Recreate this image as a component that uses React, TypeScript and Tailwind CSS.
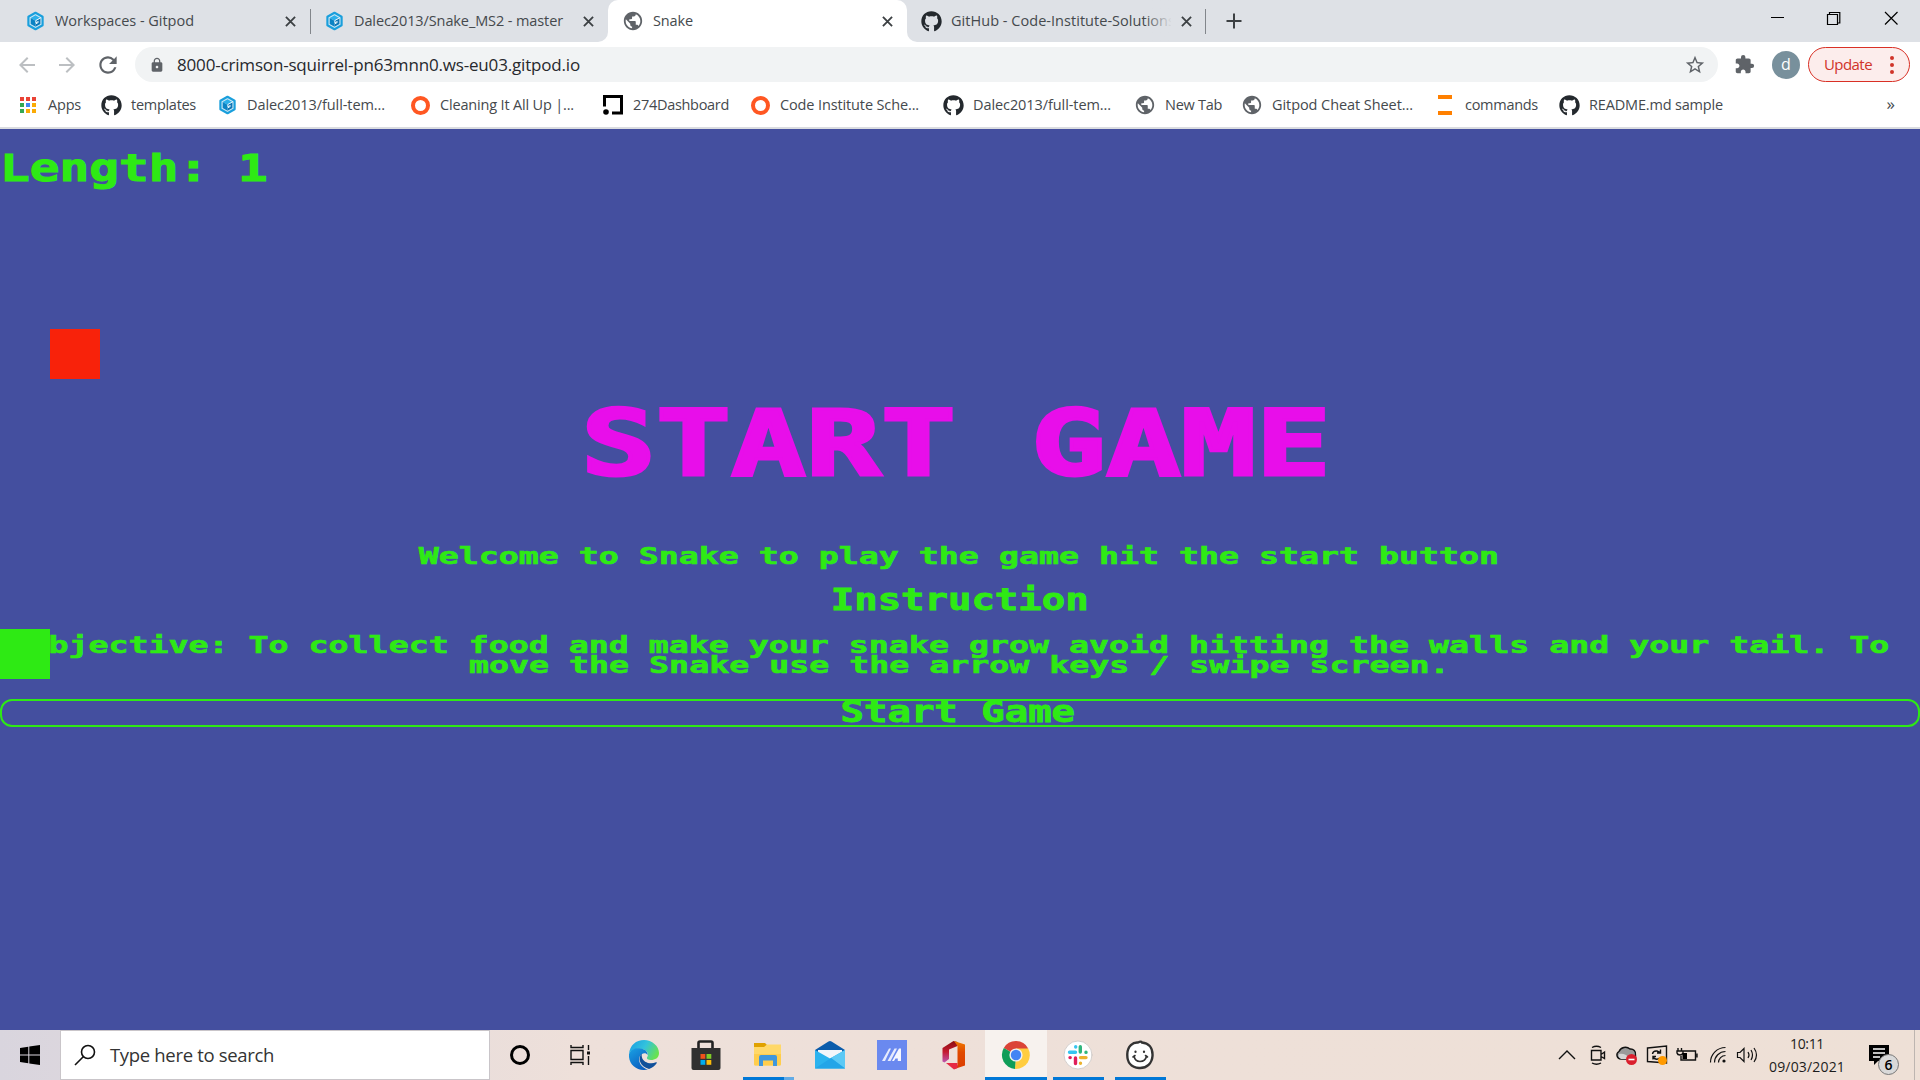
import React, { useLayoutEffect, useRef, useState, type ReactNode } from "react";
import { FaGithub } from "react-icons/fa";
import { MdArrowBack, MdArrowForward, MdExtension, MdLock, MdPublic, MdRefresh, MdStarBorder } from "react-icons/md";

/** Single-line label whose tracking is adjusted so that it fills the given width. */
function Fit({ w, className = "", children }: { w: number; className?: string; children: string }) {
  const ref = useRef<HTMLSpanElement>(null);
  const [spacing, setSpacing] = useState(0);
  useLayoutEffect(() => {
    if (ref.current) setSpacing((w - ref.current.getBoundingClientRect().width) / children.length);
  }, []);
  return (
    <span ref={ref} className={`inline-block shrink-0 whitespace-pre ${className}`} style={{ letterSpacing: spacing }}>
      {children}
    </span>
  );
}

function Gitpod() {
  return (
    <svg viewBox="0 0 20 22" className="h-[20px] w-[19px] shrink-0">
      <path d="M10 2 L17.800 6.400 V15.600 L10 20 L2.200 15.600 V6.400 Z" fill="#cfe9f6" stroke="#1a9fdc" strokeWidth="2.400" strokeLinejoin="round" />
      <path d="M10 4.800 L15.400 7.600 L10 10.800 L4.700 7.800 Z" fill="#2cb0ea" />
      <path d="M4.700 7.800 L10 10.800 V17.300 L4.700 14.300 Z" fill="#0b83c4" />
      <path d="M10 10.800 L15.400 8 V14.300 L10 17.300 Z" fill="#0f76b5" />
      <path d="M15.800 7.400 L10.400 10.400 V13 L13 11.600 V12.600 L10.400 14.200" fill="none" stroke="#e6f5fc" strokeWidth="1.100" />
    </svg>
  );
}

function Close() {
  return (
    <svg viewBox="0 0 12 12" className="h-[11px] w-[11px] shrink-0" stroke="#3c4043" strokeWidth="2">
      <path d="M1 1 L11 11 M11 1 L1 11" />
    </svg>
  );
}

const Globe = () => <MdPublic className="h-[22px] w-[22px] shrink-0 text-[#5f6368]" />;
const Github = () => <FaGithub className="h-[21px] w-[21px] shrink-0 text-[#24292e]" />;
const Ring = () => <span className="h-[19px] w-[19px] shrink-0 rounded-full border-[4.500px] border-[#ff5722]" />;

function Tab({ icon, text, w, className, children }: { icon: ReactNode; text: string; w: number; className: string; children?: ReactNode }) {
  return (
    <div className={`relative flex h-[42px] shrink-0 items-center text-[14.5px] text-[#45494d] ${className}`}>
      <span className="flex w-[22px] shrink-0 justify-center">{icon}</span>
      <div className="ml-[9px] min-w-0 flex-1 overflow-hidden">
        <Fit w={w}>{text}</Fit>
      </div>
      {children}
      <Close />
    </div>
  );
}

function TabStrip() {
  return (
    <div className="flex h-[42px] bg-[#dee1e6]">
      <Tab icon={<Gitpod />} text="Workspaces - Gitpod" w={139} className="w-[310px] pr-[14px] pl-[24px]" />
      <span className="mt-[9px] h-[25px] w-px shrink-0 bg-[#82868b]" />
      <Tab icon={<Gitpod />} text="Dalec2013/Snake_MS2 - master" w={209} className="w-[297px] pr-[14px] pl-[12px]" />
      <div className="relative flex w-[299px] shrink-0 rounded-t-[10px] bg-white">
        <span className="absolute bottom-0 -left-[10px] h-[10px] w-[10px] overflow-hidden bg-white">
          <span className="block h-[10px] w-[10px] rounded-br-[10px] bg-[#dee1e6]" />
        </span>
        <span className="absolute -right-[10px] bottom-0 h-[10px] w-[10px] overflow-hidden bg-white">
          <span className="block h-[10px] w-[10px] rounded-bl-[10px] bg-[#dee1e6]" />
        </span>
        <Tab icon={<Globe />} text="Snake" w={40} className="w-[299px] pr-[14px] pl-[14px]" />
      </div>
      <Tab icon={<Github />} text="GitHub - Code-Institute-Solutions" w={224} className="w-[298px] pr-[13px] pl-[13px]">
        <span className="absolute top-0 right-[33px] h-[41px] w-[28px] bg-gradient-to-r from-transparent to-[#dee1e6]" />
        <span className="w-[10px] shrink-0" />
      </Tab>
      <span className="mt-[9px] h-[25px] w-px shrink-0 bg-[#82868b]" />
      <svg viewBox="0 0 16 16" className="mt-[13px] ml-[20px] h-[16px] w-[16px]" stroke="#3c4043" strokeWidth="2">
        <path d="M8 0.5 V15.5 M0.5 8 H15.5" />
      </svg>
      <svg viewBox="0 0 130 16" className="mt-[10px] mr-[20px] ml-auto h-[16px] w-[130px]" fill="none" stroke="#000" strokeWidth="1.2">
        <path d="M1 7.5 H14 M57.5 4.5 H67.5 V14.5 H57.5 Z M59.5 4.5 V2.5 H69.8 V13 H67.5" />
        <path d="M115 2 L127.500 14.500 M127.500 2 L115 14.500" />
      </svg>
    </div>
  );
}

function Toolbar() {
  return (
    <div className="flex h-[45px] items-center bg-white pl-[15px]">
      <MdArrowBack className="h-[24px] w-[24px] text-[#bcbfc2]" />
      <MdArrowForward className="ml-[16px] h-[24px] w-[24px] text-[#bcbfc2]" />
      <MdRefresh className="ml-[16px] h-[26px] w-[26px] text-[#5f6368]" />
      <div className="ml-[14px] flex h-[35px] w-[1583px] items-center rounded-full bg-[#f1f3f4] pr-[12px] pl-[14px]">
        <MdLock className="h-[16px] w-[16px] text-[#5f6368]" />
        <Fit w={403} className="ml-[12px] text-[17px] text-[#27292d]">8000-crimson-squirrel-pn63mnn0.ws-eu03.gitpod.io</Fit>
        <MdStarBorder className="ml-auto h-[22px] w-[22px] text-[#5f6368]" />
      </div>
      <MdExtension className="ml-[16px] h-[21px] w-[21px] text-[#5f6368]" />
      <span className="ml-[17px] flex h-[28px] w-[28px] items-center justify-center rounded-full bg-[#78909c] pb-px text-[16px] text-white">d</span>
      <div className="ml-[8px] flex h-[35px] w-[102px] items-center rounded-full border border-[#d93025] bg-[#fcedec] pl-[15px] text-[15px] text-[#d0342a]">
        <Fit w={48}>Update</Fit>
        <span className="ml-[18px] flex flex-col gap-[3px]">
          <i className="h-[4px] w-[4px] rounded-full bg-[#d0342a]" />
          <i className="h-[4px] w-[4px] rounded-full bg-[#d0342a]" />
          <i className="h-[4px] w-[4px] rounded-full bg-[#d0342a]" />
        </span>
      </div>
    </div>
  );
}

function AppsGrid() {
  return (
    <span className="grid grid-cols-3 gap-[2px]">
      <i className="h-[4px] w-[4px] bg-[#ea4335]" />
      <i className="h-[4px] w-[4px] bg-[#ea4335]" />
      <i className="h-[4px] w-[4px] bg-[#ea4335]" />
      <i className="h-[4px] w-[4px] bg-[#34a853]" />
      <i className="h-[4px] w-[4px] bg-[#4285f4]" />
      <i className="h-[4px] w-[4px] bg-[#fbab05]" />
      <i className="h-[4px] w-[4px] bg-[#34a853]" />
      <i className="h-[4px] w-[4px] bg-[#fbab05]" />
      <i className="h-[4px] w-[4px] bg-[#fbab05]" />
    </span>
  );
}

function Bookmark({ icon, text, w, className }: { icon: ReactNode; text: string; w: number; className: string }) {
  return (
    <div className={`flex shrink-0 items-center ${className}`}>
      <span className="flex w-[22px] justify-center">{icon}</span>
      <Fit w={w} className="ml-[9px]">{text}</Fit>
    </div>
  );
}

function Bookmarks() {
  return (
    <div className="flex h-[42px] items-center border-b-2 border-[#dadce0] bg-white pb-[4px] text-[14.5px] text-[#45494d]">
      <Bookmark icon={<AppsGrid />} text="Apps" w={33} className="w-[100px] pl-[17px]" />
      <Bookmark icon={<Github />} text="templates" w={65} className="w-[116px]" />
      <Bookmark icon={<Gitpod />} text="Dalec2013/full-tem..." w={138} className="w-[193px]" />
      <Bookmark icon={<Ring />} text="Cleaning It All Up |..." w={134} className="w-[193px]" />
      <Bookmark
        icon={
          <svg viewBox="0 0 20 20" className="h-[20px] w-[20px]">
            <path d="M1.500 11.500 V1.500 H18.500 V18 H9" fill="none" stroke="#000" strokeWidth="3" />
            <circle cx="3" cy="17" r="2.800" />
          </svg>
        }
        text="274Dashboard"
        w={96}
        className="w-[147px]"
      />
      <Bookmark icon={<Ring />} text="Code Institute Sche..." w={139} className="w-[193px]" />
      <Bookmark icon={<Github />} text="Dalec2013/full-tem..." w={138} className="w-[192px]" />
      <Bookmark icon={<Globe />} text="New Tab" w={57} className="w-[107px]" />
      <Bookmark icon={<Globe />} text="Gitpod Cheat Sheet..." w={141} className="w-[193px]" />
      <Bookmark
        icon={<span className="h-[20px] w-[14px] border-y-4 border-[#ff8000]" />}
        text="commands"
        w={73}
        className="w-[124px]"
      />
      <Bookmark icon={<Github />} text="README.md sample" w={134} className="w-[180px]" />
      <span className="mr-[25px] ml-auto pb-[3px] text-[17px]">»</span>
    </div>
  );
}

function Game() {
  return (
    <main className="relative h-[901px] overflow-hidden bg-[#444f9f] font-['DejaVu_Sans_Mono',monospace] font-bold whitespace-nowrap text-[#2eea14]">
      <div className="flex h-[77px] items-center pt-px text-[38px] leading-none">
        <span className="origin-left scale-x-[1.300] [-webkit-text-stroke:1px_#2eea14]">Length: 1</span>
      </div>
      <h1 className="mt-[171px] flex h-[132px] items-center justify-center pt-px pr-[8px] text-[90px] leading-none text-[#e80eea]">
        <span className="scale-x-[1.384] [-webkit-text-stroke:3px_#e80eea]">START GAME</span>
      </h1>
      <p className="mt-[29px] flex h-[36px] items-center justify-center pr-[2px] text-[23px] leading-none">
        <span className="scale-x-[1.445] [-webkit-text-stroke:0.6px_#2eea14]">Welcome to Snake to play the game hit the start button</span>
      </p>
      <h2 className="mt-[7px] flex h-[40px] items-center justify-center text-[29.5px] leading-none">
        <span className="scale-x-[1.320] [-webkit-text-stroke:0.8px_#2eea14]">Instruction</span>
      </h2>
      <p className="mt-[14px] flex flex-col items-center pr-[2px] text-[23px] leading-[20.400px]">
        <span className="scale-x-[1.445] [-webkit-text-stroke:0.6px_#2eea14]">Objective: To collect food and make your snake grow avoid hitting the walls and your tail. To</span>
        <span className="scale-x-[1.445] [-webkit-text-stroke:0.6px_#2eea14]">move the Snake use the arrow keys / swipe screen.</span>
      </p>
      <button className="mt-[23px] flex h-[28px] w-full items-center justify-center rounded-[12px] border-2 border-[#2eea14] pr-[4px] text-[29.5px] leading-none">
        <span className="scale-x-[1.320] [-webkit-text-stroke:0.8px_#2eea14]">Start Game</span>
      </button>
      <div className="absolute top-[200px] left-[50px] h-[50px] w-[50px] bg-[#f8220a]" />
      <div className="absolute top-[500px] left-0 h-[50px] w-[50px] bg-[#2eea14]" />
    </main>
  );
}

function EdgeIcon() {
  return (
    <svg viewBox="0 0 30 30" className="h-[30px] w-[30px]">
      <defs>
        <linearGradient id="edgeTop" x1="0" y1="0.2" x2="1" y2="0.6">
          <stop offset="0" stopColor="#1ba0e2" />
          <stop offset="0.5" stopColor="#33c3dd" />
          <stop offset="1" stopColor="#6be34c" />
        </linearGradient>
        <linearGradient id="edgeSide" x1="0" y1="0" x2="0.6" y2="1">
          <stop offset="0" stopColor="#1aa1e4" />
          <stop offset="1" stopColor="#0a5fc0" />
        </linearGradient>
      </defs>
      <path d="M0 14 C1 5 7 0 15 0 C23 0 30 6 30 13 C30 18 26 20 22 20 C19 20 17.500 19 18 17.500 C20 15 19 10 13 9 C7 8 2 10 0 14 Z" fill="url(#edgeTop)" />
      <path d="M0 14 C2 9 7 7.500 12 8.500 C17 9.500 19 12.500 18.500 15 C17 12 12 13 10.500 17 C9 23 13 28 19 29.500 C9 32 -1 25 0 14 Z" fill="url(#edgeSide)" />
      <path d="M13 13.500 C8 18 11 26.500 20 29 C23 28 26 26 27.800 23 C28 22 27.500 22 27 22.300 C21 25 14 22 13 17.500 C12.700 16 12.500 15 13 13.500 Z" fill="#10509a" />
    </svg>
  );
}

function StoreIcon() {
  return (
    <svg viewBox="0 0 30 30" className="h-[30px] w-[30px]">
      <path d="M7.500 9 V3 Q7.500 1.500 9 1.500 H20 Q21.500 1.500 21.500 3 V9" fill="none" stroke="#222" strokeWidth="2.600" />
      <path d="M0.500 8 H29.500 V28 Q29.500 30 27.500 30 H2.500 Q0.500 30 0.500 28 Z" fill="#303030" />
      <path d="M9.500 14 H14.300 V18.800 H9.500 Z" fill="#f1511b" />
      <path d="M15.500 14 H20.300 V18.800 H15.500 Z" fill="#80cc28" />
      <path d="M9.500 20 H14.300 V24.800 H9.500 Z" fill="#00adef" />
      <path d="M15.500 20 H20.300 V24.800 H15.500 Z" fill="#fbbc09" />
    </svg>
  );
}

function ExplorerIcon() {
  return (
    <svg viewBox="0 0 30 30" className="h-[30px] w-[30px]">
      <path d="M1 3 H12 L14 5 V8 H1 Z" fill="#e0a100" />
      <path d="M1 7 H11 L14 4.500 H28 V24 Q28 25.500 26.500 25.500 H2.500 Q1 25.500 1 24 Z" fill="#ffd869" />
      <path d="M1 14 H28 V24 Q28 25.500 26.500 25.500 H2.500 Q1 25.500 1 24 Z" fill="#ffcd4c" />
      <path d="M6 26 V17 Q6 15 8 15 H22 Q24 15 24 17 V26 H20 V20.500 H10 V26 Z" fill="#3f97dc" />
    </svg>
  );
}

function MailIcon() {
  return (
    <svg viewBox="0 0 30 30" className="h-[30px] w-[30px]">
      <path d="M0 10 L13.500 1.500 Q15 0.500 16.500 1.500 L30 10 V18 H0 Z" fill="#0b5cab" />
      <path d="M3 10 H27 V20 H3 Z" fill="#f3f6fa" />
      <path d="M0 10 L15 18.500 L30 10 V28.500 H0 Z" fill="#2bb3ee" />
      <path d="M16 18 L30 10 V28.500 Z" fill="#5cc9f5" />
      <path d="M0 28.500 L16 18 L30 28.500 Z" fill="#22a5e8" />
    </svg>
  );
}

function AsusIcon() {
  return (
    <svg viewBox="0 0 30 30" className="h-[30px] w-[30px]">
      <path d="M0 0 H30 V30 H0 Z" fill="#6a89ef" />
      <path d="M5 21 L12 8.500 H14 L8 21 Z M10.500 21 L17.500 8.500 H20 L13.500 21 Z" fill="#e6ebfd" />
      <path d="M15 21 L22 8.500 H24 V21 H20.800 V18.500 H18.500 L17 21 Z" fill="#f5f7ff" />
    </svg>
  );
}

function OfficeIcon() {
  return (
    <svg viewBox="0 0 30 30" className="h-[30px] w-[30px]">
      <defs>
        <linearGradient id="officeLeft" x1="0" y1="0" x2="0" y2="1">
          <stop offset="0" stopColor="#8c0d10" />
          <stop offset="0.5" stopColor="#c41a30" />
          <stop offset="1" stopColor="#bd55b0" />
        </linearGradient>
        <linearGradient id="officeRight" x1="0" y1="0" x2="0" y2="1">
          <stop offset="0" stopColor="#f07a00" />
          <stop offset="0.4" stopColor="#e04a00" />
          <stop offset="1" stopColor="#dc3c00" />
        </linearGradient>
      </defs>
      <path d="M3.500 8 L14.500 1 L18.500 2 V6 L10 9.500 V19 L5.500 22.500 L3.500 21.500 Z" fill="url(#officeLeft)" />
      <path d="M15 1 L26 4.500 V25.500 L15.500 29 L18.500 25 V6 Z" fill="url(#officeRight)" />
      <path d="M7 23 H18.500 V28 L15 29.500 Z" fill="#e62a45" />
    </svg>
  );
}

function ChromeIcon() {
  return (
    <svg viewBox="0 0 30 30" className="h-[30px] w-[30px]">
      <path d="M15 15 L2.800 8 A14 14 0 0 1 27.200 8.500 Z" fill="#db4437" />
      <path d="M15 15 L27.200 8.500 A14 14 0 0 1 15 29 L14 29 Z" fill="#ffcd40" />
      <path d="M15 15 L14 29 A14 14 0 0 1 2.800 8 Z" fill="#0f9d58" />
      <path d="M15 8.500 H27.200 L21 18.500 L14.500 29 L15 21 Z" fill="#ffcd40" />
      <circle cx="15" cy="15" r="6.600" fill="#f1f1f1" />
      <circle cx="15" cy="15" r="5.200" fill="#4285f4" />
    </svg>
  );
}

function SlackIcon() {
  return (
    <svg viewBox="0 0 30 30" className="h-[30px] w-[30px]" fill="none" strokeWidth="3.400" strokeLinecap="round">
      <circle cx="15" cy="15" r="14" fill="#fff" stroke="#c9c4c2" strokeWidth="0.800" />
      <path d="M12.700 6.800 V7 M6.500 12.300 H12.500" stroke="#36c5f0" />
      <path d="M23 12.400 V12.300 M17.300 6.700 V12" stroke="#2eb67d" />
      <path d="M7 17.600 H7.200 M12.500 18 V23.500" stroke="#e01e5a" />
      <path d="M17.500 17.600 H23 M17.500 23.200 V23.300" stroke="#ecb22e" />
    </svg>
  );
}

function BalsamiqIcon() {
  return (
    <svg viewBox="0 0 30 30" className="h-[30px] w-[30px]" fill="none" stroke="#333" strokeLinecap="round">
      <path d="M13 2.500 C8 2 2.500 6 2.300 14 C2 22 6 27.500 14 28 C22 28.500 27 23 27.500 16 C28 7 23 3 17 2.500 C16 1 15 1.500 13 2.500 Z" fill="#fff" strokeWidth="2.400" />
      <path d="M9 16 Q10 21.500 15 21.500 Q20.500 21.500 21.500 16 M8 17 L10 15.500 M20.500 15.500 L22.500 17" strokeWidth="1.600" />
      <path d="M10.500 11.500 V12 M19 11.500 V12" strokeWidth="2.200" />
    </svg>
  );
}

function TaskApp({ children, className = "", bar }: { children: ReactNode; className?: string; bar?: ReactNode }) {
  return (
    <div className={`relative flex h-[50px] w-[62px] shrink-0 items-center justify-center ${className}`}>
      {children}
      {bar}
    </div>
  );
}

const Underline = () => <span className="absolute bottom-0 left-[6px] h-[3px] w-[51px] bg-[#0078d7]" />;

function Tray() {
  return (
    <svg viewBox="0 0 210 30" className="mr-[8px] ml-auto h-[30px] w-[210px] shrink-0" fill="none" stroke="#111" strokeWidth="1.400">
      <path d="M9 19 L17 11 L25 19" />
      <path d="M41.500 10.500 H51 V20 H41.500 Z M51 14.500 L54.500 12 V18.500 L51 16.500 M42 7.500 Q46.500 5 51 7.500 M42 23 Q46.500 25.500 51 23" />
      <path d="M71 19 A4 4 0 0 1 69 11.500 A7 7 0 0 1 80 9 A5 5 0 0 1 85.500 15 V19 Z" fill="#9a9a9a" />
      <path d="M69 14 Q76 13 80 19 H71 Q67.500 17 69 14 Z" fill="#d5d5d5" stroke="none" />
      <circle cx="81.500" cy="19.500" r="5.500" fill="#da1f2d" stroke="none" />
      <path d="M78.500 19.500 H84.500" stroke="#fff" strokeWidth="1.600" />
      <path d="M97.500 8 L116.500 6 V23 L97.500 21.500 Z M102.500 14 Q103 10.500 107 11 L110 12.500 M110.500 9.500 V13 H107 M103 19.500 V16.500 H106 M103 17 Q106 21 110 18" />
      <circle cx="112.500" cy="20.500" r="4.500" fill="#ff9a00" stroke="none" />
      <path d="M133 11 H145.500 V20 H131 V16 M147 13.500 V17.500 M128 8 V11 M131.500 8 V11 M127 11 H133 V13 Q132.500 15 130 15 Q127.500 15 127 13 Z" />
      <path d="M132.500 13 H137 V19 H132.500 Z" fill="#000" stroke="none" />
      <path d="M160.500 22.500 A15 15 0 0 1 175.500 7.500 M164.500 22.500 A11 11 0 0 1 175.500 11.500 M168.500 22.500 A7 7 0 0 1 175.500 15.500" strokeWidth="1.200" />
      <circle cx="174" cy="21" r="1.600" fill="#111" stroke="none" />
      <path d="M187.500 12.500 H190 L194 8.500 V21.500 L190 17.500 H187.500 Z M198 12 Q200 15 198 18 M201 10 Q204 15 201 20 M204 8 Q209 15 204 22" strokeWidth="1.200" />
    </svg>
  );
}

function Taskbar() {
  return (
    <footer className="flex h-[50px] items-center bg-gradient-to-r from-[#d9d5de] via-[#eee0da] to-[#eee0d6] via-30%">
      <div className="flex w-[60px] shrink-0 justify-center">
        <svg viewBox="0 0 20 20" className="h-[20px] w-[20px]">
          <path d="M0 3 L8.300 1.800 V9.400 H0 Z M9.300 1.600 L20 0 V9.400 H9.300 Z M0 10.500 H8.300 V18.200 L0 17 Z M9.300 10.500 H20 V20 L9.300 18.400 Z" />
        </svg>
      </div>
      <div className="flex h-[50px] w-[430px] shrink-0 items-center border border-[#c9c5c9] bg-white pl-[13px]">
        <svg viewBox="0 0 22 22" className="h-[22px] w-[22px]" fill="none" stroke="#111" strokeWidth="1.600">
          <circle cx="14" cy="8" r="6.500" />
          <path d="M9.500 12.500 L1 21" />
        </svg>
        <Fit w={164} className="ml-[14px] text-[18.5px] text-[#333]">Type here to search</Fit>
      </div>
      <div className="flex w-[60px] shrink-0 justify-center">
        <span className="h-[20px] w-[20px] rounded-full border-[3px] border-black" />
      </div>
      <div className="flex w-[63px] shrink-0 justify-center pr-[3px]">
        <svg viewBox="0 0 22 22" className="h-[22px] w-[22px]" fill="none" stroke="#111" strokeWidth="1.400">
          <path d="M2 6.500 H14 V15.500 H2 Z M2 1 V3.500 H14 V1 M2 21 V18.500 H14 V21 M19.500 1 V6 M19.500 12 V21" />
          <path d="M18 7.500 H21 V10.500 H18 Z" fill="#111" stroke="none" />
        </svg>
      </div>
      <TaskApp><EdgeIcon /></TaskApp>
      <TaskApp className="pr-[1px]"><StoreIcon /></TaskApp>
      <TaskApp
        bar={
          <span className="absolute bottom-0 left-[6px] flex h-[3px]">
            <i className="w-[41px] bg-[#0078d7]" />
            <i className="w-[10px] bg-[#62abe6]" />
          </span>
        }
      >
        <ExplorerIcon />
      </TaskApp>
      <TaskApp><MailIcon /></TaskApp>
      <TaskApp><AsusIcon /></TaskApp>
      <TaskApp><OfficeIcon /></TaskApp>
      <TaskApp className="bg-[#f7f2ee]" bar={<span className="absolute bottom-0 left-0 h-[3px] w-full bg-[#0078d7]" />}><ChromeIcon /></TaskApp>
      <TaskApp bar={<Underline />}><SlackIcon /></TaskApp>
      <TaskApp bar={<Underline />}><BalsamiqIcon /></TaskApp>
      <Tray />
      <div className="flex w-[78px] shrink-0 flex-col items-center text-[14px] leading-[23px] text-[#1c1c1c]">
        <Fit w={34}>10:11</Fit>
        <Fit w={76}>09/03/2021</Fit>
      </div>
      <div className="relative mr-[15px] ml-[23px] h-[30px] w-[30px] shrink-0">
        <svg viewBox="0 0 30 30" className="h-[30px] w-[30px]">
          <path d="M0 5 H20 V21 H9 L5 25 V21 H0 Z" />
          <path d="M4 9 H16 M4 13 H16 M4 17 H11" stroke="#fff" strokeWidth="1.500" />
        </svg>
        <span className="absolute top-[14px] left-[9px] flex h-[21px] w-[21px] items-center justify-center rounded-full border border-[#777] bg-[#d9d9d9] text-[14px] leading-none font-semibold text-black">6</span>
      </div>
      <span className="mr-[5px] h-[50px] w-px shrink-0 bg-[#bdb5b0]" />
    </footer>
  );
}

export default function App() {
  return (
    <div className="h-[1080px] w-[1920px] overflow-hidden bg-white font-['Open_Sans',sans-serif]">
      <TabStrip />
      <Toolbar />
      <Bookmarks />
      <Game />
      <Taskbar />
    </div>
  );
}
